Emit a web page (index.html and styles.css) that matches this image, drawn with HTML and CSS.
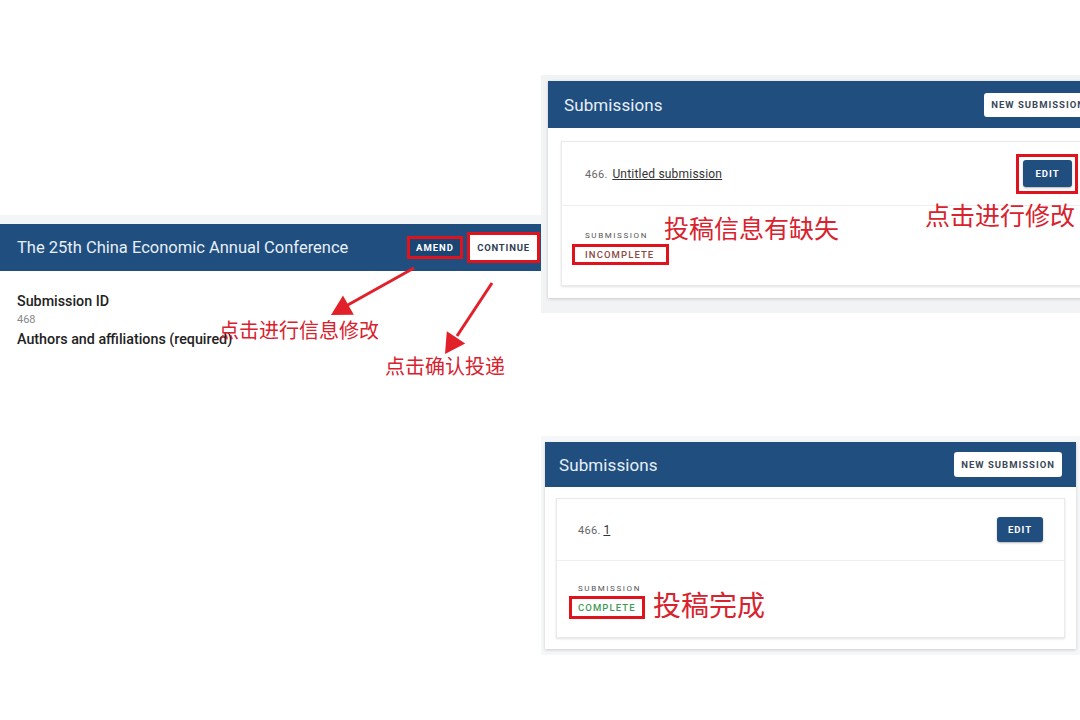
FILE: index.html
```html
<!DOCTYPE html>
<html lang="zh-CN">
<head>
  <meta charset="UTF-8" />
  <meta name="viewport" content="width=device-width, initial-scale=1.0"/>
  <title>投稿指引</title>
  <link rel="stylesheet" href="styles.css">
</head>
<body>

  <!-- screenshot 1: conference submission page -->
  <section class="shot shot-conf">
    <header class="bar bar-conf">
      <span class="bar-title">The 25th China Economic Annual Conference</span>
      <div class="bar-actions">
        <span class="mark mark-amend"><button class="btn-amend">AMEND</button></span>
        <span class="mark mark-continue"><button class="btn-continue">CONTINUE</button></span>
      </div>
    </header>
    <div class="conf-body">
      <div class="field-label">Submission ID</div>
      <div class="field-value">468</div>
      <div class="field-label">Authors and affiliations (required)</div>
    </div>
  </section>

  <!-- screenshot 2: incomplete submission -->
  <div class="backdrop backdrop-top"></div>
  <section class="shot panel panel-top">
    <header class="bar bar-top">
      <span class="bar-title">Submissions</span>
      <button class="btn-new">NEW SUBMISSION</button>
    </header>
    <div class="card card-top">
      <div class="card-row">
        <span class="sub-title"><span class="sub-num">466.</span> <a href="#">Untitled submission</a></span>
        <span class="mark mark-edit"><button class="btn-edit">EDIT</button></span>
      </div>
      <div class="card-status">
        <div class="status-label">SUBMISSION</div>
        <span class="mark mark-status"><span class="status incomplete">INCOMPLETE</span></span>
      </div>
    </div>
  </section>

  <!-- screenshot 3: complete submission -->
  <div class="backdrop backdrop-bottom"></div>
  <section class="shot panel panel-bottom">
    <header class="bar bar-bottom">
      <span class="bar-title">Submissions</span>
      <button class="btn-new">NEW SUBMISSION</button>
    </header>
    <div class="card card-bottom">
      <div class="card-row">
        <span class="sub-title"><span class="sub-num">466.</span> <a href="#">1</a></span>
        <button class="btn-edit">EDIT</button>
      </div>
      <div class="card-status">
        <div class="status-label">SUBMISSION</div>
        <span class="mark mark-status"><span class="status complete">COMPLETE</span></span>
      </div>
    </div>
  </section>

  <!-- annotations -->
  <svg class="arrows" width="1080" height="720" viewBox="0 0 1080 720">
    <line x1="414" y1="268" x2="346" y2="306" />
    <polygon points="331,315 353.8,314.8 343,295.6" />
    <line x1="492" y1="283" x2="457" y2="336" />
    <polygon points="445,354 465.2,343.4 446.8,331.2" />
  </svg>

  <span class="note note-amend">点击进行信息修改</span>
  <span class="note note-continue">点击确认投递</span>
  <span class="note note-missing">投稿信息有缺失</span>
  <span class="note note-edit">点击进行修改</span>
  <span class="note note-done">投稿完成</span>

</body>
</html>
```

FILE: styles.css
```css
* {
  box-sizing: border-box;
}

body {
  margin: 0;
  width: 1080px;
  height: 720px;
  overflow: hidden;
  position: relative;
  background: #fff;
  font-family: Roboto, "Noto Sans CJK SC", sans-serif;
  color: #222;
}

button {
  font-family: Roboto, sans-serif;
  border: none;
  cursor: pointer;
}

/* screenshots are placed on a free canvas */
.shot {
  position: absolute;
}

.backdrop {
  position: absolute;
}

.bar {
  display: flex;
  align-items: center;
  justify-content: space-between;
  background: #1f4e7f;
}

.bar-title {
  color: #e8eff7;
  font-size: 17px;
  letter-spacing: 0.1px;
}

/* red outline boxes */
.mark {
  display: inline-flex;
  align-items: center;
  border: 3px solid #e0121b;
}

/* --- conference page --- */
.shot-conf {
  left: 0;
  top: 215px;
  width: 541px;
  padding-top: 9px;
  background: #f4f5f7;
}

.bar-conf {
  height: 47px;
  padding: 0 1px 0 17px;
}

.bar-conf .bar-title {
  font-size: 16.5px;
  letter-spacing: 0;
}

.bar-actions {
  display: flex;
  align-items: center;
  gap: 4px;
}

.mark-amend {
  width: 56px;
  height: 23px;
}

.btn-amend {
  width: 100%;
  height: 100%;
  background: #1b4572;
  color: #fff;
  font-size: 9.5px;
  font-weight: 700;
  letter-spacing: 1px;
  padding: 0;
}

.mark-continue {
  width: 73px;
  height: 31px;
}

.btn-continue {
  width: 100%;
  height: 100%;
  background: #fff;
  color: #2c3e52;
  font-size: 9.5px;
  font-weight: 700;
  letter-spacing: 0.8px;
  padding: 0;
}

.conf-body {
  background: #fff;
  padding: 21px 17px 30px;
}

.field-label {
  font-size: 14.3px;
  font-weight: 500;
  line-height: 18px;
  color: #222;
}

.field-value {
  font-size: 11px;
  line-height: 20px;
  color: #8a8a8a;
}

/* --- submissions panels --- */
.panel {
  background: #fff;
  box-shadow: 0 1px 3px rgba(0, 0, 0, 0.18);
}

.backdrop-top {
  left: 541px;
  top: 75px;
  width: 539px;
  height: 238px;
  background: #f2f3f5;
}

.panel-top {
  left: 548px;
  top: 81px;
  width: 558px;
  padding-bottom: 12px;
}

.bar-top {
  height: 47px;
  padding: 0 14px 0 16px;
}

.backdrop-bottom {
  left: 541px;
  top: 436px;
  width: 539px;
  height: 219px;
  background: #f6f7f8;
}

.panel-bottom {
  left: 545px;
  top: 442px;
  width: 531px;
  padding-bottom: 11px;
}

.bar-bottom {
  height: 45px;
  padding: 0 14px;
}

.btn-new {
  background: #fff;
  color: #3a4859;
  font-size: 9.5px;
  font-weight: 700;
  letter-spacing: 1px;
  height: 25px;
  padding: 0 7px;
  border-radius: 3px;
}

.panel-top .btn-new {
  height: 24px;
}

.card {
  background: #fff;
  border: 1px solid #e8eaed;
  box-shadow: 0 1px 2px rgba(0, 0, 0, 0.12);
}

.card-top {
  margin: 13px 13px 0;
}

.card-bottom {
  margin: 11px 11px 0;
}

.card-row {
  display: flex;
  align-items: center;
  justify-content: space-between;
  border-bottom: 1px solid #eceef0;
}

.card-top .card-row {
  height: 64px;
  padding: 0 14px 0 23px;
}

.card-bottom .card-row {
  height: 62px;
  padding: 0 21px 0 21px;
}

.sub-title {
  font-size: 11px;
  color: #555;
}

.sub-num {
  color: #666;
  letter-spacing: 0.3px;
}

.sub-title a {
  color: #333;
  text-decoration: underline;
  letter-spacing: 0.2px;
}

.card-top .sub-title a {
  font-size: 12px;
  margin-left: 2px;
}

.card-bottom .sub-title a {
  font-size: 12px;
}

.mark-edit {
  height: 40px;
  padding: 0 3px 0 4px;
}

.btn-edit {
  width: 49px;
  height: 27px;
  background: #1f4e7f;
  color: #fff;
  font-size: 9.5px;
  font-weight: 700;
  letter-spacing: 1px;
  border-radius: 3px;
  box-shadow: 0 1px 2px rgba(0, 0, 0, 0.3);
  padding: 0;
}

.card-bottom .btn-edit {
  width: 46px;
  height: 25px;
}

.card-status {
  display: flex;
  flex-direction: column;
  align-items: flex-start;
}

.card-top .card-status {
  height: 79px;
  padding: 24px 0 0 23px;
}

.card-bottom .card-status {
  height: 76px;
  padding: 22px 0 0 21px;
}

.status-label {
  font-size: 8px;
  line-height: 12px;
  letter-spacing: 1.6px;
  color: #555;
}

.mark-status {
  margin-top: 2px;
}

.card-top .mark-status {
  margin-left: -13px;
  height: 21px;
  padding: 0 12px 0 10px;
}

.card-bottom .mark-status {
  margin-left: -9px;
  margin-top: 1px;
  height: 23px;
  padding: 0 6px;
}

.status {
  font-size: 9.5px;
  font-weight: 500;
  letter-spacing: 1.1px;
}

.incomplete {
  color: #8c4a3f;
}

.complete {
  color: #3f9a56;
}

/* --- annotations drawn on top --- */
.arrows {
  position: absolute;
  left: 0;
  top: 0;
}

.arrows line {
  stroke: #e2202a;
  stroke-width: 3;
}

.arrows polygon {
  fill: #e2202a;
}

.note {
  position: absolute;
  color: #d8222e;
  font-family: "Noto Sans CJK SC", sans-serif;
  line-height: 1;
  white-space: nowrap;
}

.note-amend {
  left: 219px;
  top: 320px;
  font-size: 20px;
}

.note-continue {
  left: 385px;
  top: 356px;
  font-size: 20px;
}

.note-missing {
  left: 664px;
  top: 215px;
  font-size: 25px;
}

.note-edit {
  left: 925px;
  top: 202px;
  font-size: 25px;
}

.note-done {
  left: 653px;
  top: 590px;
  font-size: 28px;
}
```
